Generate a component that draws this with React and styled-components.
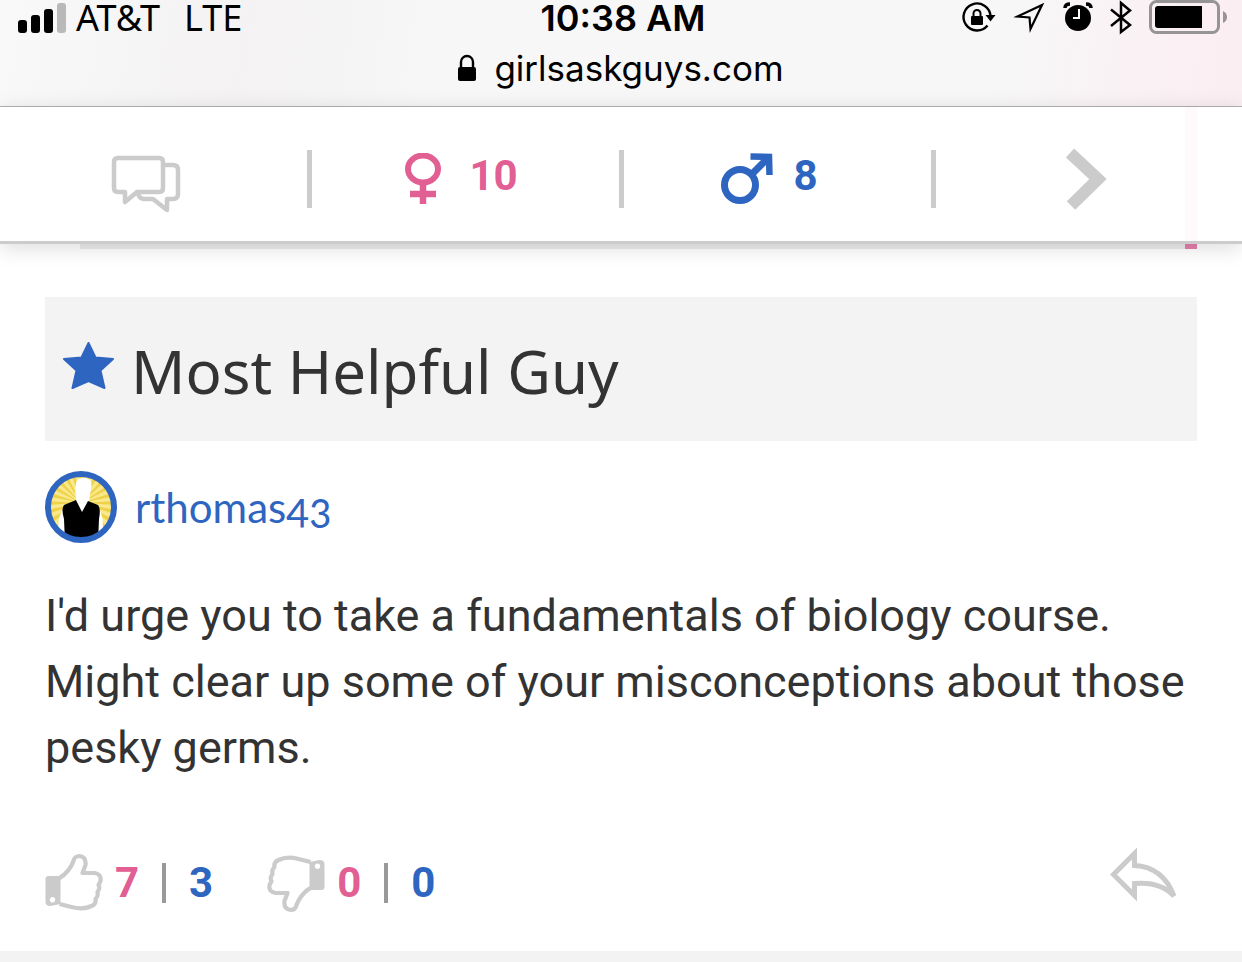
import React from "react";
import styled, { createGlobalStyle } from "styled-components";

const colors = {
  pink: "#e15f93",
  blue: "#2e65c0",
  text: "#333333",
  icon: "#cbcbcb",
  panel: "#f3f3f3",
};

function App() {
  return (
    <Page>
      <GlobalStyle />
      <BrowserBar>
        <StatusRow>
          <StatusGroup>
            <SignalIcon />
            <Carrier>AT&amp;T</Carrier>
            <Carrier>LTE</Carrier>
          </StatusGroup>
          <Clock>10:38 AM</Clock>
          <StatusIcons />
        </StatusRow>
        <Address>
          <LockIcon />
          <span>girlsaskguys.com</span>
        </Address>
      </BrowserBar>
      <Nav>
        <NavCell>
          <NavLink href="#opinions" aria-label="Opinions">
            <ChatIcon />
          </NavLink>
          <NavDivider />
        </NavCell>
        <NavCell>
          <NavLink href="#girls">
            <FemaleIcon />
            <NavCount $color={colors.pink}>10</NavCount>
          </NavLink>
          <NavDivider />
        </NavCell>
        <NavCell>
          <NavLink href="#guys">
            <MaleIcon />
            <NavCount $color={colors.blue}>8</NavCount>
          </NavLink>
          <NavDivider />
        </NavCell>
        <NavCell>
          <NavLink href="#next" aria-label="Next" $last>
            <ChevronIcon />
          </NavLink>
        </NavCell>
      </Nav>
      <PreviousCard />
      <Opinion>
        <Heading>
          <StarIcon />
          <Title>Most Helpful Guy</Title>
        </Heading>
        <Author href="#rthomas43">
          <Avatar />
          <span>rthomas43</span>
        </Author>
        <Message>
          I'd urge you to take a fundamentals of biology course. Might clear up
          some of your misconceptions about those pesky germs.
        </Message>
        <Actions>
          <VoteButton aria-label="Like">
            <ThumbUpIcon />
            <Votes girls="7" guys="3" />
          </VoteButton>
          <VoteButton aria-label="Dislike">
            <ThumbDownIcon />
            <Votes girls="0" guys="0" />
          </VoteButton>
          <ReplyButton aria-label="Reply">
            <ReplyIcon />
          </ReplyButton>
        </Actions>
      </Opinion>
      <BottomBand />
    </Page>
  );
}

function Votes({ girls, guys }) {
  return (
    <VoteCounts>
      <Count $color={colors.pink}>{girls}</Count>
      <VoteDivider />
      <Count $color={colors.blue}>{guys}</Count>
    </VoteCounts>
  );
}

function SignalIcon() {
  return (
    <svg width="48" height="32" viewBox="18 1 48 32">
      <rect x="18" y="19" width="9" height="13" rx="3" />
      <rect x="31" y="14" width="9" height="18" rx="3" />
      <rect x="44" y="8" width="9" height="24" rx="3" />
      <rect x="57" y="2" width="9" height="30" rx="3" fill="#b9b9b9" />
    </svg>
  );
}

function StatusIcons() {
  return (
    <StatusDrawing viewBox="960 0 268 36">
      {/* rotation lock */}
      <path
        d="M987.5 25.5A13.5 13.5 0 1 1 990.5 16"
        fill="none"
        stroke="#000"
        strokeWidth="2.4"
      />
      <path d="M985.500 15h10l-5 6.500z" />
      <rect x="971" y="16" width="12" height="9" rx="1" />
      <path
        d="M973.500 17v-3.500a3.500 3.500 0 0 1 7 0V17"
        fill="none"
        stroke="#000"
        strokeWidth="2"
      />
      {/* location */}
      <path
        d="M1042 5L1017.500 16.500L1029.500 17.500L1030.500 29Z"
        fill="none"
        stroke="#000"
        strokeWidth="2.200"
      />
      {/* alarm */}
      <circle cx="1078" cy="18" r="13" />
      <path
        d="M1065 8q0-4 5-4M1091 8q0-4-5-4"
        fill="none"
        stroke="#000"
        strokeWidth="3.500"
      />
      <path d="M1079 9v9h-6" fill="none" stroke="#fff" strokeWidth="2" />
      {/* bluetooth */}
      <path
        d="M1111 9.500L1130 25L1121 32V3L1130 10.500L1111 26"
        fill="none"
        stroke="#000"
        strokeWidth="2.500"
      />
      {/* battery */}
      <rect
        x="1150.500"
        y="1.500"
        width="68"
        height="31"
        rx="6"
        fill="none"
        stroke="#979495"
        strokeWidth="3"
      />
      <path d="M1158 6h44v22h-44a3 3 0 0 1-3-3V9a3 3 0 0 1 3-3z" />
      <path d="M1223 11q4 2 4 6t-4 6z" fill="#979495" />
    </StatusDrawing>
  );
}

function LockIcon() {
  return (
    <svg width="18" height="28" viewBox="464 53 18 28">
      <rect x="464" y="66" width="18" height="14" rx="2" />
      <path
        d="M467 68v-7a6 6 0 0 1 12 0v7"
        fill="none"
        stroke="#000"
        strokeWidth="2.400"
      />
    </svg>
  );
}

function ChatIcon() {
  return (
    <svg width="72" height="72" viewBox="110 143 72 72">
      <g
        fill="none"
        stroke={colors.icon}
        strokeWidth="4.500"
        strokeLinejoin="round"
      >
        <path d="M118 158h41q4 0 4 4v26q0 4-4 4h-22L125 202v-10h-7q-4 0-4-4v-26q0-4 4-4z" />
        <path d="M163 165h10q5 0 5 5v24q0 5-5 5h-6v11l-14-11h-9q-4 0-6-5" />
      </g>
    </svg>
  );
}

function FemaleIcon() {
  return (
    <svg width="52" height="52" viewBox="397 153 52 52">
      <g fill="none" stroke={colors.pink}>
        <ellipse cx="423" cy="169" rx="15" ry="13.500" strokeWidth="6" />
        <path d="M423 182v22M410 194h26" strokeWidth="6.500" />
      </g>
    </svg>
  );
}

function MaleIcon() {
  return (
    <svg width="52" height="52" viewBox="722 153 52 52">
      <g fill="none" stroke={colors.blue}>
        <circle cx="741" cy="185" r="15.500" strokeWidth="7" />
        <path d="M753 174L770 157" strokeWidth="7" />
        <path d="M751.500 156.500L770 157L770.500 175" strokeWidth="6.500" />
      </g>
    </svg>
  );
}

function ChevronIcon() {
  return (
    <svg width="52" height="64" viewBox="1063 147 52 64">
      <path
        d="M1070 153L1098 179L1071 205.500"
        fill="none"
        stroke={colors.icon}
        strokeWidth="12"
      />
    </svg>
  );
}

function StarIcon() {
  return (
    <svg width="52" height="48" viewBox="63 341 52 48">
      <path
        d="M88.500 343l7 14.500 17.500 1.500-12.500 11.500 4 17.500-16-7-16 7 4-17.500L64 359l17.500-1.500z"
        fill={colors.blue}
        stroke={colors.blue}
        strokeWidth="2"
        strokeLinejoin="round"
      />
    </svg>
  );
}

function Avatar() {
  const rays = Array.from({ length: 24 }, (_, i) => i * 15);
  return (
    <svg width="72" height="72" viewBox="0 0 72 72">
      <defs>
        <clipPath id="avatar-face">
          <circle cx="36" cy="36" r="31" />
        </clipPath>
      </defs>
      <g clipPath="url(#avatar-face)">
        <rect width="72" height="72" fill="#f9e98c" />
        {rays.map((angle) => (
          <path
            key={angle}
            d="M36 32L33.500 -10H38.500z"
            fill="#efd24a"
            transform={`rotate(${angle} 36 32)`}
          />
        ))}
        <path
          d="M31 29q-2-20 3-21 6-3 11 1 3 3 0 14l-1 7 9 7q5 5 5 20v15H13V57q1-15 6-20z"
          fill="#fff"
        />
        <path d="M31 29l6 12 6-11 10 4q3 3 1 14l-1 24H20l-1-24q-3-10 0-14z" />
      </g>
      <circle
        cx="36"
        cy="36"
        r="33"
        fill="none"
        stroke={colors.blue}
        strokeWidth="6"
      />
    </svg>
  );
}

function Thumb() {
  return (
    <>
      <path
        d="M46 873q0-3 3-3h12v28l-10 2q-5 0-5-4zM53.500 891a2.800 2.800 0 1 0 .1 5.500a2.800 2.800 0 0 0-.1-5.500z"
        fill={colors.icon}
        fillRule="evenodd"
      />
      <path
        d="M60 872C66 869 72 861 74 855Q75 850 80 850Q87 851 86 859L83 867H95Q102 868 101 875Q100 877 99 879Q101 882 98 886Q99 890 96 893Q97 898 92 900Q84 904 72 901L60 898"
        fill="none"
        stroke={colors.icon}
        strokeWidth="4.200"
        strokeLinejoin="round"
      />
    </>
  );
}

function ThumbUpIcon() {
  return (
    <svg width="58" height="66" viewBox="45.500 844 58 66">
      <Thumb />
    </svg>
  );
}

function ThumbDownIcon() {
  return (
    <svg width="58" height="66" viewBox="45.500 844 58 66">
      <g transform="rotate(180 74.500 877)">
        <Thumb />
      </g>
    </svg>
  );
}

function ReplyIcon() {
  return (
    <svg width="70" height="60" viewBox="1110 841 70 60">
      <path
        d="M1113.500 868.500L1134.500 847.500V859.500Q1163 861 1174 890Q1160 875 1134.500 877.500V889.500Z"
        fill="none"
        stroke={colors.icon}
        strokeWidth="5"
      />
    </svg>
  );
}

const GlobalStyle = createGlobalStyle`
  * {
    box-sizing: border-box;
  }

  body {
    margin: 0;
    background: #ffffff;
    color: ${colors.text};
    font-family: Roboto, "Liberation Sans", sans-serif;
  }

  svg {
    display: block;
    flex: none;
  }

  button {
    padding: 0;
    border: 0;
    background: none;
    font: inherit;
    cursor: pointer;
  }

  a {
    text-decoration: none;
  }
`;

const Page = styled.div`
  min-height: 100vh;
  display: flex;
  flex-direction: column;
`;

const BrowserBar = styled.header`
  height: 107px;
  color: #000000;
  font-family: Inter, "Liberation Sans", sans-serif;
  background: linear-gradient(
    100deg,
    #f9f9f9 0%,
    #f4f2f3 20%,
    #f7f7f7 36%,
    #f7f7f7 80%,
    #fbeef3 98%
  );
  border-bottom: 1px solid #b2b2b2;
`;

const StatusRow = styled.div`
  height: 36px;
  padding: 0 14px 0 18px;
  display: grid;
  grid-template-columns: 1fr auto 1fr;
  align-items: center;
`;

const StatusGroup = styled.div`
  display: flex;
  align-items: center;
`;

const Carrier = styled.span`
  margin-left: 10px;
  font-family: "Noto Sans", sans-serif;
  font-size: 36px;
  line-height: 36px;

  & + & {
    margin-left: 24px;
  }
`;

const Clock = styled.span`
  font-size: 36px;
  line-height: 36px;
  font-weight: 600;
`;

const StatusDrawing = styled.svg`
  width: 268px;
  height: 36px;
  justify-self: end;
`;

const Address = styled.div`
  height: 64px;
  display: flex;
  align-items: center;
  justify-content: center;
  gap: 18px;
  font-size: 35px;
`;

const Nav = styled.nav`
  position: relative;
  height: 137px;
  padding-top: 10px;
  display: grid;
  grid-template-columns: 52fr 52fr 52fr 51fr;
  background: #ffffff;
  border-bottom: 3px solid #cccccc;
  box-shadow: 0 4px 20px rgba(0, 0, 0, 0.14);

  /* edge of the card scrolled under the bar */
  &::after {
    content: "";
    position: absolute;
    top: 0;
    bottom: 0;
    right: 45px;
    width: 12px;
    background: #fef9fb;
  }
`;

const NavCell = styled.div`
  display: flex;
  align-items: center;
`;

const NavLink = styled.a`
  flex: 1;
  margin-right: ${(props) => (props.$last ? 0 : "16px")};
  display: flex;
  align-items: center;
  justify-content: center;
  gap: 20px;
`;

const NavDivider = styled.span`
  width: 5px;
  height: 58px;
  background: #cccccc;
`;

const Count = styled.span`
  color: ${(props) => props.$color};
  font-size: 42px;
  line-height: 48px;
  font-weight: 700;
`;

const NavCount = styled(Count)`
  padding-bottom: 6px;
`;

const PreviousCard = styled.div`
  height: 5px;
  margin: 0 45px 0 80px;
  background: #ececec;
  border-right: 12px solid #e57fab;
`;

const Opinion = styled.article`
  flex: 1;
  padding: 48px 45px 0;
`;

const Heading = styled.header`
  height: 144px;
  padding: 0 18px;
  display: flex;
  align-items: center;
  gap: 16px;
  background: ${colors.panel};

  svg {
    margin-bottom: 8px;
  }
`;

const Title = styled.h2`
  margin: 0;
  padding-top: 4px;
  font-family: "Noto Sans", sans-serif;
  font-size: 60px;
  font-weight: 400;
`;

const Author = styled.a`
  margin-top: 30px;
  display: inline-flex;
  align-items: center;
  gap: 18px;
  color: ${colors.blue};
  font-family: Lato, sans-serif;
  font-size: 42px;
  line-height: 48px;
  font-variant-numeric: oldstyle-nums;
`;

const Message = styled.p`
  margin: 36px 0 0;
  font-size: 45px;
  line-height: 66px;
`;

const Actions = styled.footer`
  margin-top: 66px;
  display: flex;
  align-items: center;
  gap: 54px;
`;

const VoteButton = styled.button`
  display: flex;
  align-items: center;
  gap: 12px;
`;

const VoteCounts = styled.span`
  display: flex;
  align-items: center;
  gap: 23px;
`;

const VoteDivider = styled.span`
  width: 4px;
  height: 40px;
  background: #999999;
`;

const ReplyButton = styled.button`
  margin-left: auto;
  margin-right: 17px;
  padding-bottom: 12px;
`;

const BottomBand = styled.div`
  height: 11px;
  background: ${colors.panel};
`;

export default App;
